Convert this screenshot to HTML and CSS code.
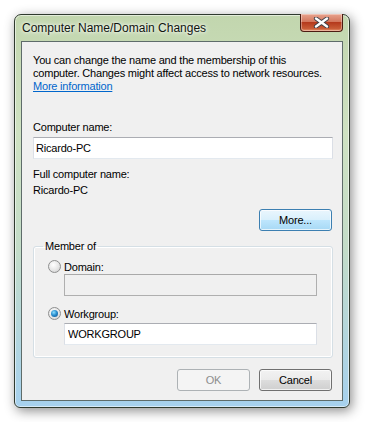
FILE: index.html
```html
<!DOCTYPE html>
<html lang="en">
<head>
    <meta charset="utf-8">
    <title>Computer Name/Domain Changes</title>
    <link rel="stylesheet" href="styles.css">
</head>
<body>
    <div class="window">
        <div class="titlebar">
            <span class="title">Computer Name/Domain Changes</span>
            <button class="close" aria-label="Close">
                <svg width="17" height="11" viewBox="0 0 17 11">
                    <path d="M3 1.5 L14 9.5 M14 1.5 L3 9.5" stroke="#3a3f48" stroke-width="4.2" stroke-linecap="round"/>
                    <path d="M3 1.5 L14 9.5 M14 1.5 L3 9.5" stroke="#ffffff" stroke-width="2.4" stroke-linecap="round"/>
                </svg>
            </button>
        </div>
        <div class="client">
            <p class="desc">You can change the name and the membership of this<br>computer. Changes might affect access to network resources.<br><a href="#">More information</a></p>

            <label class="field-label">Computer name:</label>
            <input type="text" class="textbox" value="Ricardo-PC">

            <p class="full-label">Full computer name:</p>
            <p class="full-value">Ricardo-PC</p>

            <div class="row">
                <button class="btn hot">More...</button>
            </div>

            <fieldset class="group">
                <legend>Member of</legend>
                <div class="radio-row first">
                    <span class="radio"></span>
                    <span>Domain:</span>
                </div>
                <input type="text" class="textbox sub" disabled>
                <div class="radio-row second">
                    <span class="radio checked"></span>
                    <span>Workgroup:</span>
                </div>
                <input type="text" class="textbox sub" value="WORKGROUP">
            </fieldset>

            <div class="row buttons">
                <button class="btn" disabled>OK</button>
                <button class="btn">Cancel</button>
            </div>
        </div>
    </div>
</body>
</html>
```

FILE: styles.css
```css
body {
    margin: 0;
    padding: 14px;
    background: #ffffff;
    font-family: "Liberation Sans", Arial, sans-serif;
    font-size: 11px;
    letter-spacing: -0.2px;
    color: #000000;
}
.window {
    box-sizing: border-box;
    width: 336px;
    height: 394px;
    border: 1px solid #2f3a2e;
    border-radius: 7px 7px 6px 6px;
    background: linear-gradient(180deg, #c2d6ae 0%, #cfe2c2 30%, #c3dcc8 60%, #a6d1ee 100%);
    box-shadow: 2px 3px 12px rgba(0, 0, 0, 0.45), inset 0 0 0 1px rgba(255, 255, 255, 0.55);
    padding: 0 6px 6px 6px;
    display: flex;
    flex-direction: column;
}
.titlebar {
    height: 26px;
    display: flex;
    justify-content: space-between;
    align-items: flex-start;
}
.title {
    margin-top: 6px;
    margin-left: 1px;
    font-size: 12px;
    letter-spacing: 0;
    color: #10150f;
    text-shadow: 0 0 6px #ffffff, 0 0 3px #ffffff;
}
.close {
    width: 43px;
    height: 18px;
    margin-top: -1px;
    padding: 0;
    border: 1px solid #4c1c12;
    border-top: none;
    border-radius: 0 0 4px 4px;
    background: linear-gradient(180deg, #e8a38e 0%, #d3775d 45%, #b53a1d 50%, #c85b36 85%, #e89670 100%);
    box-shadow: inset 0 0 0 1px rgba(255, 255, 255, 0.35);
    display: flex;
    align-items: center;
    justify-content: center;
}
.client {
    flex: 1;
    border: 1px solid #5e6c6a;
    background: #f0f0f0;
    padding: 0 10px 0 11px;
    display: flex;
    flex-direction: column;
}
.desc {
    margin: 12px 0 0 0;
    line-height: 13px;
    white-space: nowrap;
}
.desc a {
    color: #0066cc;
}
.field-label {
    margin-top: 28px;
    line-height: 13px;
}
.textbox {
    box-sizing: border-box;
    width: 300px;
    height: 22px;
    margin: 3px 0 0 0;
    padding: 0 2px;
    font-family: inherit;
    font-size: 11px;
    letter-spacing: -0.2px;
    color: #000000;
    background: #ffffff;
    border: 1px solid #dbdfe6;
    border-top-color: #abadb3;
    border-bottom-color: #e3e9ef;
    outline: none;
}
.textbox:disabled {
    background: #f0f0f0;
    border-color: #afafaf;
    border-top-color: #a9a9a9;
}
.full-label {
    margin: 8px 0 0 0;
    line-height: 15px;
}
.full-value {
    margin: 1px 0 0 0;
    line-height: 15px;
}
.row {
    display: flex;
    justify-content: flex-end;
    gap: 9px;
}
.btn {
    box-sizing: border-box;
    width: 73px;
    height: 22px;
    margin-top: 11px;
    padding: 0;
    font-family: inherit;
    font-size: 11px;
    letter-spacing: -0.2px;
    color: #000000;
    border: 1px solid #707070;
    border-radius: 3px;
    background: linear-gradient(180deg, #f2f2f2 0%, #ebebeb 48%, #dddddd 50%, #cfcfcf 100%);
    box-shadow: inset 0 0 0 1px rgba(255, 255, 255, 0.7);
}
.btn.hot {
    border-color: #3c7fb1;
    background: linear-gradient(180deg, #eaf6fd 0%, #d9f0fc 48%, #bee6fd 50%, #a7d9f5 100%);
}
.btn:disabled {
    color: #8d8d8d;
    border-color: #adb2b5;
    background: #f4f4f4;
    box-shadow: none;
}
.group {
    box-sizing: border-box;
    width: 300px;
    height: 119px;
    margin: 8px 0 0 0;
    padding: 0 0 0 14px;
    border: 1px solid #d5dfe5;
    border-radius: 3px;
    box-shadow: inset 0 0 0 1px #ffffff;
}
.group legend {
    margin-left: -5px;
    padding: 0 2px;
    line-height: 15px;
}
.radio-row {
    display: flex;
    align-items: center;
    gap: 3px;
    height: 15px;
}
.radio-row.first {
    margin-top: 5px;
}
.radio-row.second {
    margin-top: 10px;
}
.group .textbox.sub {
    width: 253px;
    margin: 0 0 0 16px;
    padding: 0 3px;
}
.group .radio-row.second + .textbox.sub {
    margin-top: 2px;
}
.radio {
    box-sizing: border-box;
    width: 13px;
    height: 13px;
    border-radius: 50%;
    border: 1px solid #8e8f8f;
    background: radial-gradient(circle at 40% 35%, #ffffff 0%, #e6e6e6 55%, #c9c9c9 100%);
    display: flex;
    align-items: center;
    justify-content: center;
}
.radio.checked::after {
    content: "";
    width: 7px;
    height: 7px;
    border-radius: 50%;
    background: radial-gradient(circle at 40% 35%, #8fe0ff 0%, #2a8fcf 45%, #0c4a86 100%);
}
.buttons {
    margin-top: 0;
}
```
